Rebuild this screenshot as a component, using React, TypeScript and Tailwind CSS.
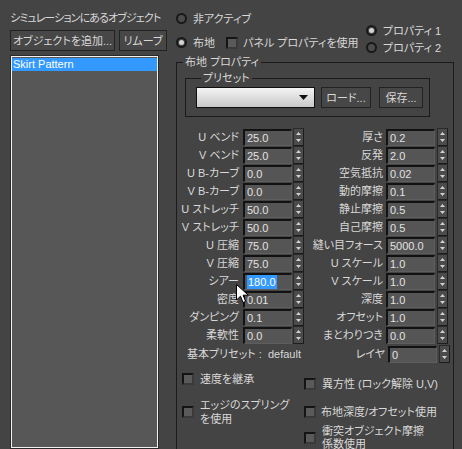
import React from 'react';

const LEFT_PARAMS = [
  ['U ベンド', '25.0'],
  ['V ベンド', '25.0'],
  ['U B-カーブ', '0.0'],
  ['V B-カーブ', '0.0'],
  ['U ストレッチ', '50.0'],
  ['V ストレッチ', '50.0'],
  ['U 圧縮', '75.0'],
  ['V 圧縮', '75.0'],
  ['シアー', '180.0'],
  ['密度', '0.01'],
  ['ダンピング', '0.1'],
  ['柔軟性', '0.0'],
];

const RIGHT_PARAMS = [
  ['厚さ', '0.2'],
  ['反発', '2.0'],
  ['空気抵抗', '0.02'],
  ['動的摩擦', '0.1'],
  ['静止摩擦', '0.5'],
  ['自己摩擦', '0.5'],
  ['縫い目フォース', '5000.0'],
  ['U スケール', '1.0'],
  ['V スケール', '1.0'],
  ['深度', '1.0'],
  ['オフセット', '1.0'],
  ['まとわりつき', '0.0'],
];

function Radio({ checked }: { checked?: boolean }) {
  return (
    <span className="w-[11px] h-[11px] shrink-0 rounded-full border-2 border-[#191919] bg-[#4c4c4c] flex items-center justify-center">
      {checked && <span className="w-[5px] h-[5px] rounded-full bg-[#d4d4d4]" />}
    </span>
  );
}

function Check() {
  return (
    <span className="block w-[12px] h-[12px] shrink-0 bg-[#5a5a5a] border-2 border-t-[#141414] border-l-[#141414] border-b-[#3a3a3a] border-r-[#3a3a3a]" />
  );
}

function Spinner() {
  return (
    <div className="w-[11px] h-[18px] shrink-0 bg-[#4b4b4b] border border-t-[#2a2a2a] border-l-[#2a2a2a] border-b-[#1c1c1c] border-r-[#1c1c1c] flex flex-col items-center justify-between py-[3px]">
      <svg width="5" height="3" viewBox="0 0 5 3">
        <path d="M2.5 0L5 3H0z" fill="#d2d2d2" />
      </svg>
      <svg width="5" height="3" viewBox="0 0 5 3">
        <path d="M0 0H5L2.5 3z" fill="#d2d2d2" />
      </svg>
    </div>
  );
}

function Field({ value, selected }: { value: string; selected?: boolean }) {
  return (
    <div className="w-[49px] h-[17px] shrink-0 bg-[#555555] border-t-2 border-l-2 border-b border-r border-t-[#121212] border-l-[#121212] border-b-[#5e5e5e] border-r-[#5e5e5e] pl-[2px] text-[11px] leading-[14px] text-[#e2e2e2] flex items-center">
      <span className={selected ? 'bg-[#3399ff] text-white px-[1px]' : ''}>{value}</span>
    </div>
  );
}

export default function App() {
  return (
    <div className="w-[462px] h-[449px] overflow-hidden bg-[#444444] text-[#d8d8d8] text-[11px] leading-[14px] [font-family:'Liberation_Sans','Noto_Sans_CJK_JP',sans-serif] [font-feature-settings:'palt'] flex relative">
      {/* left column: objects in simulation */}
      <div className="w-[176px] shrink-0 pl-[10px] pt-[11px] flex flex-col">
        <div className="whitespace-nowrap tracking-[-0.9px]">シミュレーションにあるオブジェクト</div>
        <div className="flex gap-[4px] mt-[5px]">
          <button className="w-[105px] h-[21px] bg-[#474747] border border-[#222222] text-[#d8d8d8] whitespace-nowrap">
            オブジェクトを追加...
          </button>
          <button className="w-[48px] h-[21px] bg-[#474747] border border-[#222222] text-[#d8d8d8]">
            リムーブ
          </button>
        </div>
        <div className="mt-[4px] w-[149px] h-[420px] border border-[#2a2a2a] bg-[#f2f2f2] p-[1px]">
          <div className="w-full h-full bg-[#575757] pt-[1px]">
            <div className="h-[13px] bg-[#3399ff] text-white text-[11px] leading-[13px] pl-[1px]">Skirt Pattern</div>
          </div>
        </div>
      </div>

      {/* right column */}
      <div className="flex-1 flex flex-col">
        <div className="h-[55px] flex shrink-0">
          <div className="w-[190px] pt-[12px] flex flex-col">
            <div className="h-[13px] flex items-center gap-[6px]">
              <Radio />
              <span>非アクティブ</span>
            </div>
            <div className="h-[13px] mt-[11px] flex items-center">
              <Radio checked />
              <span className="ml-[6px]">布地</span>
              <span className="ml-[11px]">
                <Check />
              </span>
              <span className="ml-[5px] whitespace-nowrap">パネル プロパティを使用</span>
            </div>
          </div>
          <div className="pt-[24px] flex flex-col gap-[4px]">
            <div className="h-[13px] flex items-center gap-[6px]">
              <Radio checked />
              <span className="whitespace-nowrap">プロパティ 1</span>
            </div>
            <div className="h-[13px] flex items-center gap-[6px]">
              <Radio />
              <span className="whitespace-nowrap">プロパティ 2</span>
            </div>
          </div>
        </div>

        <fieldset className="w-[278px] border border-b-0 border-[#1b1b1b] flex-1">
          <legend className="ml-[6px] px-[2px] leading-[14px]">布地 プロパティ</legend>

          {/* presets */}
          <fieldset className="ml-[8px] mt-[2px] w-[245px] border border-[#1b1b1b] pl-[10px] pt-[2px] pb-[8px]">
            <legend className="ml-[5px] px-[2px] leading-[14px]">プリセット</legend>
            <div className="flex items-center">
              <div className="w-[119px] h-[21px] border border-[#101010] bg-gradient-to-b from-[#f4f4f4] to-[#c9c9c9] flex items-center justify-end pr-[6px]">
                <svg width="9" height="5" viewBox="0 0 9 5">
                  <path d="M0 0H9L4.5 5z" fill="#111" />
                </svg>
              </div>
              <button className="ml-[6px] w-[50px] h-[21px] bg-[#474747] border border-[#222222] text-[#d8d8d8]">
                ロード...
              </button>
              <button className="ml-[8px] w-[44px] h-[21px] bg-[#474747] border border-[#222222] text-[#d8d8d8]">
                保存...
              </button>
            </div>
          </fieldset>

          {/* parameters */}
          <div className="mt-[11px] flex flex-col">
            {LEFT_PARAMS.map(([label, value], i) => (
              <div key={label} className="h-[18px] flex items-center">
                <span className="w-[62px] text-right whitespace-nowrap">{label}</span>
                <span className="ml-[4px]">
                  <Field value={value} selected={label === 'シアー'} />
                </span>
                <span className="ml-[1px]">
                  <Spinner />
                </span>
                <span className="w-[78px] ml-[1px] text-right whitespace-nowrap">{RIGHT_PARAMS[i][0]}</span>
                <span className="ml-[3px]">
                  <Field value={RIGHT_PARAMS[i][1]} />
                </span>
                <span className="ml-[2px]">
                  <Spinner />
                </span>
              </div>
            ))}
            <div className="h-[20px] flex items-center">
              <span className="w-[129px] pl-[10px] whitespace-nowrap">基本プリセット :&nbsp; default</span>
              <span className="w-[78px] ml-[1px] text-right">レイヤ</span>
              <span className="ml-[3px]">
                <Field value="0" />
              </span>
              <span className="ml-[2px]">
                <Spinner />
              </span>
            </div>
          </div>

          {/* checkboxes */}
          <div className="flex">
            <div className="w-[127px] pl-[5px] flex flex-col">
              <div className="mt-[8px] flex items-center gap-[6px]">
                <Check />
                <span>速度を継承</span>
              </div>
              <div className="mt-[12px] flex items-center gap-[6px]">
                <Check />
                <span className="leading-[14px]">
                  エッジのスプリング
                  <br />
                  を使用
                </span>
              </div>
            </div>
            <div className="flex flex-col">
              <div className="mt-[13px] flex items-center gap-[6px]">
                <Check />
                <span className="whitespace-nowrap">異方性 (ロック解除 U,V)</span>
              </div>
              <div className="mt-[14px] flex items-center gap-[5px]">
                <Check />
                <span className="whitespace-nowrap">布地深度/オフセット使用</span>
              </div>
              <div className="mt-[6px] flex items-center gap-[6px]">
                <Check />
                <span className="leading-[13px]">
                  衝突オブジェクト摩擦
                  <br />
                  係数使用
                </span>
              </div>
            </div>
          </div>
        </fieldset>
      </div>

      {/* mouse cursor */}
      <svg className="absolute left-[236px] top-[284px]" width="13" height="20" viewBox="0 0 13 20">
        <path d="M0.5 0.5V16L4.5 12.2L7 18.5L9.6 17.4L7.1 11.2H12.3Z" fill="#ffffff" stroke="#000000" strokeWidth="1" />
      </svg>
    </div>
  );
}
